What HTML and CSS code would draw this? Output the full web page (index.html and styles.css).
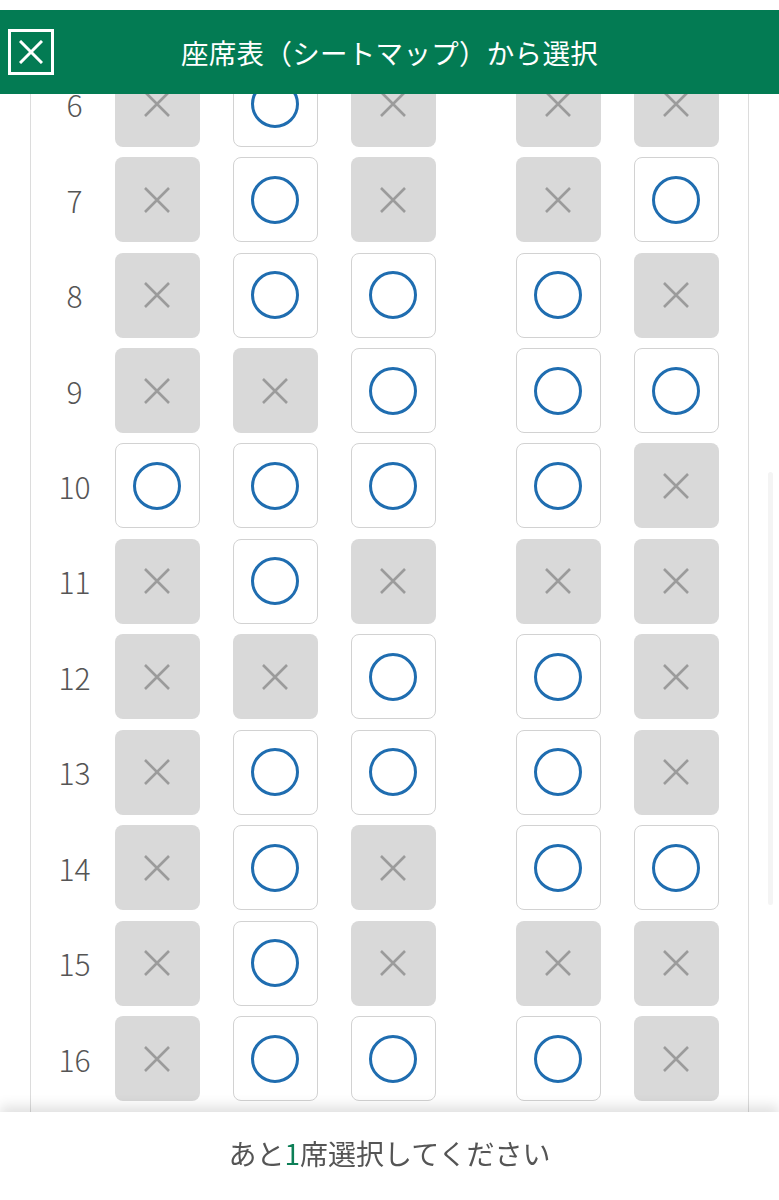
FILE: index.html
```html
<!DOCTYPE html>
<html lang="ja">
<head>
    <meta charset="UTF-8">
    <meta name="viewport" content="width=device-width, initial-scale=1.0">
    <title>座席表（シートマップ）から選択</title>
    <link rel="stylesheet" href="styles.css">
</head>
<body>
    <header class="top">
        <div class="top-bar">
            <button class="close" aria-label="閉じる">
                <svg width="24" height="24" viewBox="0 0 24 24"><path d="M1 1L23 23M23 1L1 23" stroke="#fff" stroke-width="3" fill="none"/></svg>
            </button>
            <h1>座席表（シートマップ）から選択</h1>
        </div>
    </header>

    <main class="map" id="map"></main>

    <div class="scroll-thumb"></div>

    <footer class="bottom">
        あと<span class="count">1</span>席選択してください
    </footer>

    <script>
        // o = 空席, x = 予約済み（左3席 + 通路 + 右2席）
        const rows = {
            6:  'xoxxx',
            7:  'xoxxo',
            8:  'xooox',
            9:  'xxooo',
            10: 'oooox',
            11: 'xoxxx',
            12: 'xxoox',
            13: 'xooox',
            14: 'xoxoo',
            15: 'xoxxx',
            16: 'xooox',
            17: 'xoxox'
        };

        const cross = '<svg width="26" height="26" viewBox="0 0 26 26"><path d="M1 1L25 25M25 1L1 25" stroke="#9b9b9b" stroke-width="2.6" fill="none"/></svg>';
        const map = document.getElementById('map');

        Object.keys(rows).forEach(num => {
            const row = document.createElement('div');
            row.className = 'row';
            let html = `<div class="row-num">${num}</div>`;
            rows[num].split('').forEach((s, i) => {
                if (i === 3) html += '<div class="aisle"></div>';
                html += s === 'o'
                    ? '<button class="seat open"><span class="ring"></span></button>'
                    : `<button class="seat taken" disabled>${cross}</button>`;
            });
            row.innerHTML = html;
            map.appendChild(row);
        });
    </script>
</body>
</html>
```

FILE: styles.css
```css
html, body {
    margin: 0;
    background: #fff;
}
body {
    font-family: 'Noto Sans CJK JP', 'Noto Sans', sans-serif;
    color: #555;
    overflow: hidden;
}
.top {
    position: fixed;
    top: 0;
    left: 0;
    right: 0;
    padding-top: 9.5px;
    background: #fff;
    z-index: 10;
}
.top-bar {
    position: relative;
    height: 84.5px;
    background: #037b53;
    display: flex;
    align-items: center;
    justify-content: center;
}
.top-bar h1 {
    margin: 0;
    font-size: 27.5px;
    font-weight: normal;
    color: #fff;
    letter-spacing: 0.3px;
}
.close {
    position: absolute;
    left: 8px;
    top: 19.5px;
    width: 46px;
    height: 46px;
    padding: 0;
    border: 3px solid #fff;
    background: transparent;
    display: flex;
    align-items: center;
    justify-content: center;
    cursor: pointer;
}
.map {
    margin: 0 30px;
    padding-top: 61.7px;
    padding-bottom: 100px;
    border-left: 1.5px solid #dcdcdc;
    border-right: 1.5px solid #dcdcdc;
    display: flex;
    flex-direction: column;
    gap: 10.45px;
}
.row {
    display: flex;
    align-items: center;
    gap: 33px;
    padding-left: 3.5px;
}
.row-num {
    width: 80px;
    margin-right: -33px;
    text-align: center;
    font-size: 30px;
    font-weight: 300;
    color: #555;
}
.aisle {
    width: 14px;
}
.seat {
    width: 85px;
    height: 85px;
    padding: 0;
    border-radius: 8px;
    display: flex;
    align-items: center;
    justify-content: center;
    box-sizing: border-box;
}
.seat.open {
    background: #fff;
    border: 1.8px solid #d2d2d2;
    cursor: pointer;
}
.seat.taken {
    background: #d9d9d9;
    border: none;
}
.ring {
    width: 48px;
    height: 48px;
    box-sizing: border-box;
    border: 3.9px solid #1f6db0;
    border-radius: 50%;
}
.scroll-thumb {
    position: fixed;
    right: 6px;
    top: 472px;
    width: 5px;
    height: 433px;
    background: #f4f4f4;
    border-radius: 3px;
}
.bottom {
    position: fixed;
    left: 0;
    right: 0;
    bottom: 0;
    height: 88.5px;
    padding-bottom: 6px;
    box-sizing: border-box;
    background: #fff;
    box-shadow: 0 -6px 12px rgba(0, 0, 0, 0.12);
    display: flex;
    align-items: center;
    justify-content: center;
    font-size: 28px;
    color: #555;
    z-index: 10;
}
.count {
    color: #0d7f57;
}
```
